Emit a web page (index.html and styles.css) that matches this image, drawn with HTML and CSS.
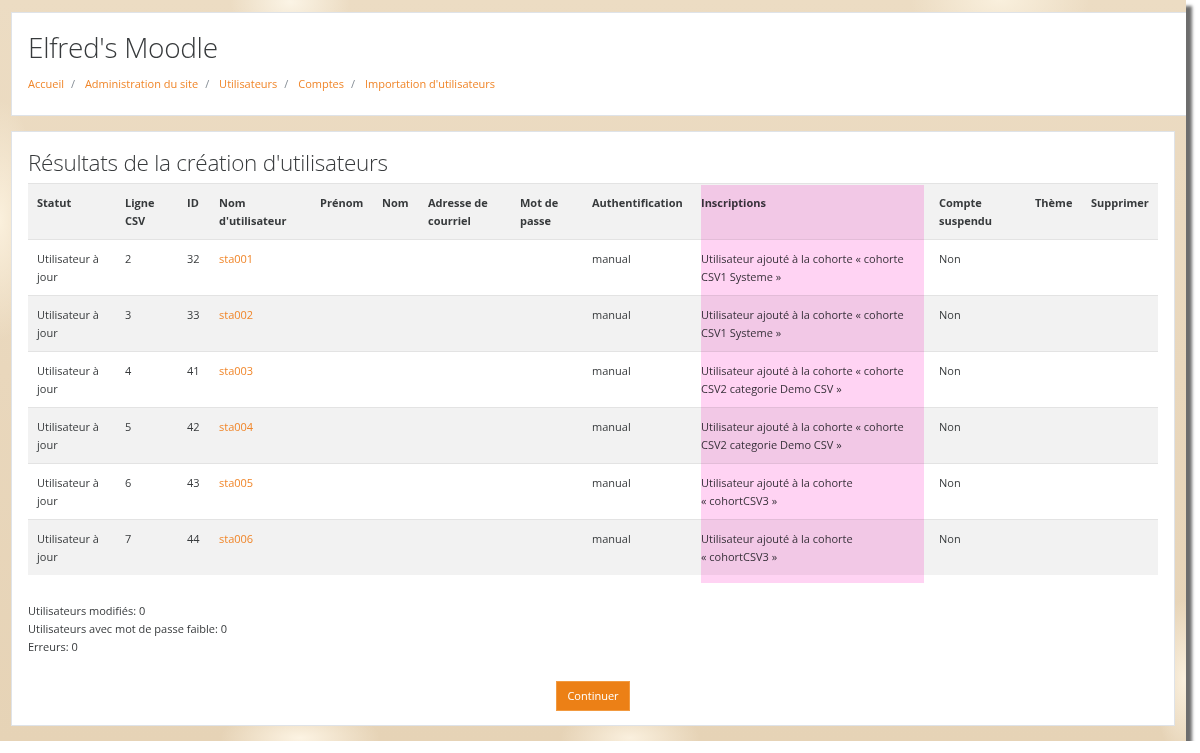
FILE: index.html
```html
<!DOCTYPE html>
<html lang="fr">
<head>
<meta charset="utf-8">
<title>Elfred's Moodle</title>
<link rel="stylesheet" href="styles.css">
</head>
<body>
<div class="screen">
  <header class="card page-header">
    <h1 class="site-title">Elfred's Moodle</h1>
    <nav class="breadcrumb">
      <a href="#">Accueil</a><span class="sep">/</span>
      <a href="#">Administration du site</a><span class="sep">/</span>
      <a href="#">Utilisateurs</a><span class="sep">/</span>
      <a href="#">Comptes</a><span class="sep">/</span>
      <a href="#">Importation d'utilisateurs</a>
    </nav>
  </header>

  <main class="card main-card">
    <h2 class="page-title">Résultats de la création d'utilisateurs</h2>
    <div class="table-wrap">
      <table class="results">
        <colgroup>
          <col class="c1"><col class="c2"><col class="c3"><col class="c4"><col class="c5"><col class="c6"><col class="c7"><col class="c8"><col class="c9"><col class="c10"><col class="c11"><col class="c12"><col class="c13">
        </colgroup>
        <thead>
          <tr>
            <th>Statut</th><th>Ligne CSV</th><th>ID</th><th>Nom d'utilisateur</th><th>Prénom</th><th>Nom</th><th>Adresse de courriel</th><th>Mot de passe</th><th>Authentification</th><th>Inscriptions</th><th>Compte suspendu</th><th>Thème</th><th>Supprimer</th>
          </tr>
        </thead>
        <tbody>
          <tr><td>Utilisateur à jour</td><td>2</td><td>32</td><td><a href="#">sta001</a></td><td></td><td></td><td></td><td></td><td>manual</td><td>Utilisateur ajouté à la cohorte « cohorte CSV1 Systeme »</td><td>Non</td><td></td><td></td></tr>
          <tr><td>Utilisateur à jour</td><td>3</td><td>33</td><td><a href="#">sta002</a></td><td></td><td></td><td></td><td></td><td>manual</td><td>Utilisateur ajouté à la cohorte « cohorte CSV1 Systeme »</td><td>Non</td><td></td><td></td></tr>
          <tr><td>Utilisateur à jour</td><td>4</td><td>41</td><td><a href="#">sta003</a></td><td></td><td></td><td></td><td></td><td>manual</td><td>Utilisateur ajouté à la cohorte « cohorte CSV2 categorie Demo CSV »</td><td>Non</td><td></td><td></td></tr>
          <tr><td>Utilisateur à jour</td><td>5</td><td>42</td><td><a href="#">sta004</a></td><td></td><td></td><td></td><td></td><td>manual</td><td>Utilisateur ajouté à la cohorte « cohorte CSV2 categorie Demo CSV »</td><td>Non</td><td></td><td></td></tr>
          <tr><td>Utilisateur à jour</td><td>6</td><td>43</td><td><a href="#">sta005</a></td><td></td><td></td><td></td><td></td><td>manual</td><td>Utilisateur ajouté à la cohorte<br>« cohortCSV3 »</td><td>Non</td><td></td><td></td></tr>
          <tr><td>Utilisateur à jour</td><td>7</td><td>44</td><td><a href="#">sta006</a></td><td></td><td></td><td></td><td></td><td>manual</td><td>Utilisateur ajouté à la cohorte<br>« cohortCSV3 »</td><td>Non</td><td></td><td></td></tr>
        </tbody>
      </table>
      <div class="highlight"></div>
    </div>

    <div class="summary">
      <p>Utilisateurs modifiés: 0</p>
      <p>Utilisateurs avec mot de passe faible: 0</p>
      <p>Erreurs: 0</p>
    </div>

    <div class="actions">
      <button class="btn-primary" type="button">Continuer</button>
    </div>
  </main>
</div>
</body>
</html>
```

FILE: styles.css
```css
html, body {
  margin: 0;
  padding: 0;
  background: #ffffff;
}

body {
  font-family: "Open Sans", "Noto Sans", "DejaVu Sans", sans-serif;
  color: #373a3c;
  font-size: 12px;
  line-height: 18px;
}

.screen {
  width: 1186px;
  height: 741px;
  box-sizing: border-box;
  padding: 12px 0 0 11px;
  overflow: hidden;
  background:
    radial-gradient(ellipse 60px 40px at 290px 2px, rgba(255, 250, 238, 0.8), rgba(255, 250, 238, 0) 100%),
    radial-gradient(ellipse 90px 50px at 1000px 0px, rgba(255, 248, 232, 0.7), rgba(255, 248, 232, 0) 100%),
    radial-gradient(ellipse 40px 120px at 0px 220px, rgba(255, 246, 228, 0.8), rgba(255, 246, 228, 0) 100%),
    radial-gradient(ellipse 80px 30px at 300px 738px, rgba(255, 247, 232, 0.9), rgba(255, 247, 232, 0) 100%),
    radial-gradient(ellipse 70px 30px at 630px 738px, rgba(255, 247, 232, 0.8), rgba(255, 247, 232, 0) 100%),
    radial-gradient(ellipse 30px 80px at 1184px 680px, rgba(255, 247, 232, 0.8), rgba(255, 247, 232, 0) 100%),
    linear-gradient(180deg, #ecdcc3 0%, #e9d7bc 50%, #e6d3b6 100%);
  box-shadow: 6px 6px 3px rgba(60, 60, 60, 0.75);
}

.card {
  background: #ffffff;
  border: 1px solid #dfe3e8;
  box-sizing: border-box;
}

.page-header {
  width: 1200px;
  height: 104px;
  padding: 16px 16px;
}

.site-title {
  margin: 0;
  font-size: 28px;
  line-height: 36px;
  font-weight: 300;
  color: #373a3c;
  letter-spacing: -0.3px;
}

.breadcrumb {
  margin-top: 10px;
  font-size: 11px;
  line-height: 18px;
  color: #6a737b;
}

.breadcrumb a {
  color: #f0862a;
  text-decoration: none;
}

.breadcrumb .sep {
  color: #868e96;
  padding: 0 7px;
}

.main-card {
  margin-top: 15px;
  width: 1164px;
  height: 595px;
  padding: 16px 16px;
}

.page-title {
  margin: 0 0 5px 0;
  font-size: 22.5px;
  line-height: 30px;
  font-weight: 300;
  color: #373a3c;
  letter-spacing: -0.25px;
}

.table-wrap {
  position: relative;
}

.results {
  width: 1130px;
  table-layout: fixed;
  border-collapse: collapse;
  font-size: 11px;
  line-height: 18px;
}

.c1 { width: 88px; }
.c2 { width: 62px; }
.c3 { width: 32px; }
.c4 { width: 101px; }
.c5 { width: 62px; }
.c6 { width: 46px; }
.c7 { width: 92px; }
.c8 { width: 72px; }
.c9 { width: 109px; }
.c10 { width: 238px; }
.c11 { width: 96px; }
.c12 { width: 56px; }
.c13 { width: 76px; }

.results th,
.results td {
  text-align: left;
  vertical-align: top;
  padding: 10px 9px 9px 9px;
  border-top: 1px solid #e3e3e3;
  height: 36px;
}

.results th {
  font-weight: 700;
  color: #373a3c;
  background: #f2f2f2;
}

.results tbody tr:nth-child(even) td {
  background: #f2f2f2;
}

.results a {
  color: #f0862a;
  text-decoration: none;
}

.highlight {
  position: absolute;
  left: 673px;
  top: 2px;
  width: 223px;
  height: 398px;
  background: #ffd3f3;
  mix-blend-mode: multiply;
  pointer-events: none;
}

.summary {
  margin-top: 27px;
  font-size: 11px;
}

.summary p {
  margin: 0;
}

.actions {
  margin-top: 25px;
  display: flex;
  justify-content: center;
}

.btn-primary {
  font-family: "Open Sans", "Noto Sans", sans-serif;
  font-size: 11px;
  line-height: 18px;
  color: #ffffff;
  background: #ec8016;
  border: 1px solid #f29a40;
  padding: 5px 10px;
  border-radius: 0;
}
```
